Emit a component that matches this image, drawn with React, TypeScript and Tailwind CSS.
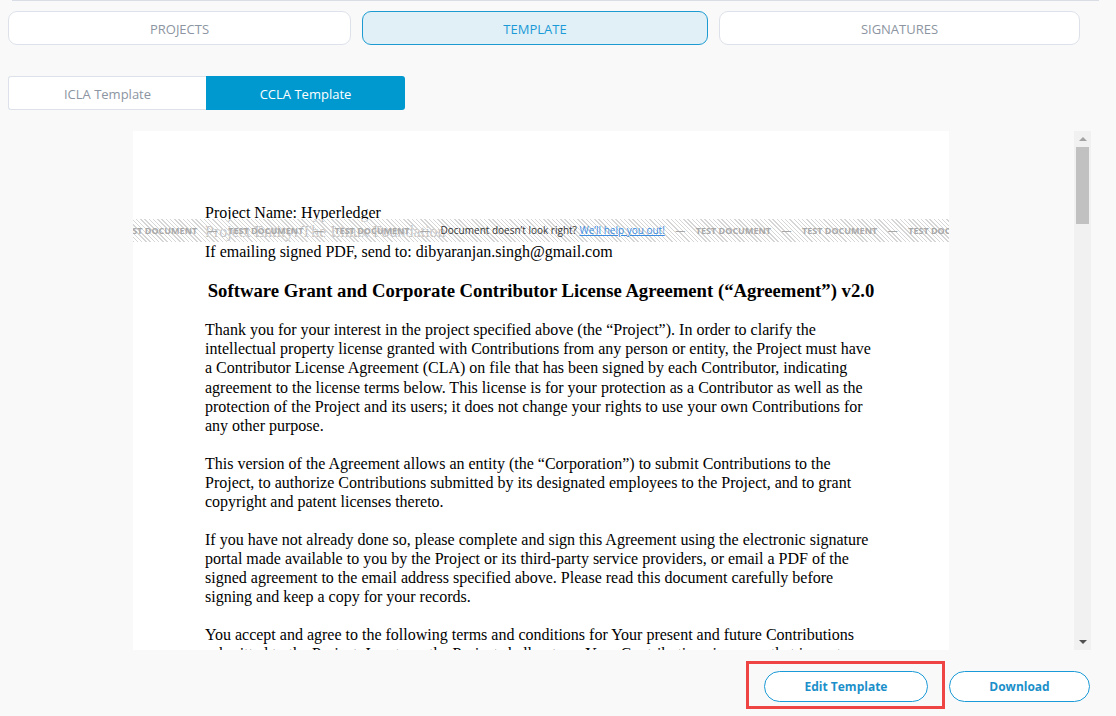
import { ReactNode } from 'react'

const paragraphs = [
  'Thank you for your interest in the project specified above (the “Project”). In order to clarify the intellectual property license granted with Contributions from any person or entity, the Project must have a Contributor License Agreement (CLA) on file that has been signed by each Contributor, indicating agreement to the license terms below. This license is for your protection as a Contributor as well as the protection of the Project and its users; it does not change your rights to use your own Contributions for any other purpose.',
  'This version of the Agreement allows an entity (the “Corporation”) to submit Contributions to the Project, to authorize Contributions submitted by its designated employees to the Project, and to grant copyright and patent licenses thereto.',
  'If you have not already done so, please complete and sign this Agreement using the electronic signature portal made available to you by the Project or its third-party service providers, or email a PDF of the signed agreement to the email address specified above. Please read this document carefully before signing and keep a copy for your records.',
  'You accept and agree to the following terms and conditions for Your present and future Contributions submitted to the Project. In return, the Project shall not use Your Contributions in a way that is contrary to the public benefit or inconsistent with its nonprofit status and bylaws in effect at the time of the Contribution. Except for the license granted herein to the Project and recipients of software distributed by the Project, You reserve all right, title, and interest in and to Your Contributions.',
]

function Tab({ label, active, width }: { label: string; active?: boolean; width: string }) {
  return (
    <button
      className={
        active
          ? `${width} h-[34px] rounded-[9px] border border-[#1c9bd3] bg-[#e1f0f6] pt-[3px] text-[13px] uppercase text-[#1a9ad6]`
          : `${width} h-[34px] rounded-[9px] border border-[#dde2ea] bg-white pt-[3px] text-[13px] uppercase text-[#8c95a1]`
      }
    >
      {label}
    </button>
  )
}

function Mark() {
  return <span className="font-bold text-[9px] text-[#a8a8a8]">TEST DOCUMENT</span>
}

function Dash() {
  return <span className="text-[10px] text-[#a8a8a8]">—</span>
}

function Watermark() {
  const items: ReactNode[] = [
    <Mark key="a" />, <Dash key="b" />, <Mark key="c" />, <Dash key="d" />, <Mark key="e" />, <Dash key="f" />,
    <span key="g" className="text-[10px] text-[#333]">
      Document doesn’t look right?{' '}
      <span className="text-[#3b8be0] underline">We’ll help you out!</span>
    </span>,
    <Dash key="h" />, <Mark key="i" />, <Dash key="j" />, <Mark key="k" />, <Dash key="l" />, <Mark key="m" />,
  ]
  return (
    <div className="absolute left-0 right-0 top-[88px] h-[23px] overflow-hidden bg-white/75 bg-[repeating-linear-gradient(45deg,#d6d6d6_0px,#d6d6d6_1px,transparent_1px,transparent_3px)]">
      <div className="ml-[-11px] flex h-full items-center gap-[10.5px] whitespace-nowrap font-['Open_Sans',sans-serif]">
        {items}
      </div>
    </div>
  )
}

function Scrollbar() {
  return (
    <div className="flex w-[17px] flex-col items-center bg-[#f1f1f1]">
      <div className="flex h-[16px] items-center justify-center">
        <div className="h-0 w-0 border-x-[4px] border-b-[4px] border-x-transparent border-b-[#a3a3a3]" />
      </div>
      <div className="h-[77px] w-[13px] bg-[#c1c1c1]" />
      <div className="flex-1" />
      <div className="flex h-[16px] items-center justify-center">
        <div className="h-0 w-0 border-x-[4px] border-t-[4px] border-x-transparent border-t-[#505050]" />
      </div>
    </div>
  )
}

export default function App() {
  return (
    <div className="min-h-[716px] w-[1116px] bg-[#f9f9f9] font-['Open_Sans',sans-serif]">
      <div className="ml-[12px] h-px w-[1087px] bg-[#d9dee6]" />

      <div className="mt-[10px] flex gap-[11px] pl-[8px]">
        <Tab label="Projects" width="w-[343px]" />
        <Tab label="Template" width="w-[346px]" active />
        <Tab label="Signatures" width="w-[361px]" />
      </div>

      <div className="mt-[31px] flex pl-[8px]">
        <button className="h-[34px] w-[198px] rounded-l-[3px] border border-r-0 border-[#dde2ea] bg-white pt-[3px] text-[13px] text-[#8c95a1]">
          ICLA Template
        </button>
        <button className="h-[34px] w-[199px] rounded-r-[3px] bg-[#0099cf] pt-[3px] text-[13px] text-white">
          CCLA Template
        </button>
      </div>

      <div className="mt-[21px] ml-[8px] flex h-[519px] w-[1083px]">
        <div className="flex flex-1 justify-center overflow-hidden">
          <div className="relative h-[1056px] w-[816px] shrink-0 bg-white px-[72px] pt-[72px] font-['Liberation_Serif','Times_New_Roman',serif] text-[16px] leading-[19.3px] text-black">
            <p>Project Name: Hyperledger</p>
            <p>Project Entity: The Linux Foundation</p>
            <p>If emailing signed PDF, send to: dibyaranjan.singh@gmail.com</p>
            <h1 className="mt-[19px] mb-[18px] text-center text-[18.7px] font-bold leading-[22px]">
              Software Grant and Corporate Contributor License Agreement (“Agreement”) v2.0
            </h1>
            {paragraphs.map((p, i) => (
              <p key={i} className="mb-[18px]">
                {p}
              </p>
            ))}
            <Watermark />
          </div>
        </div>
        <Scrollbar />
      </div>

      <div className="mt-[21px] flex justify-end gap-[21px] pr-[26px]">
        <div className="relative">
          <button className="h-[31px] w-[164px] rounded-full border border-[#1a9ad6] bg-white text-[12px] font-bold text-[#1a8fc9]">
            Edit Template
          </button>
          <div className="pointer-events-none absolute left-[-18px] right-[-17px] top-[-10px] bottom-[-7px] border-[3px] border-[#ef4444]" />
        </div>
        <button className="h-[31px] w-[141px] rounded-full border border-[#1a9ad6] bg-white text-[12px] font-bold text-[#1a8fc9]">
          Download
        </button>
      </div>
    </div>
  )
}
